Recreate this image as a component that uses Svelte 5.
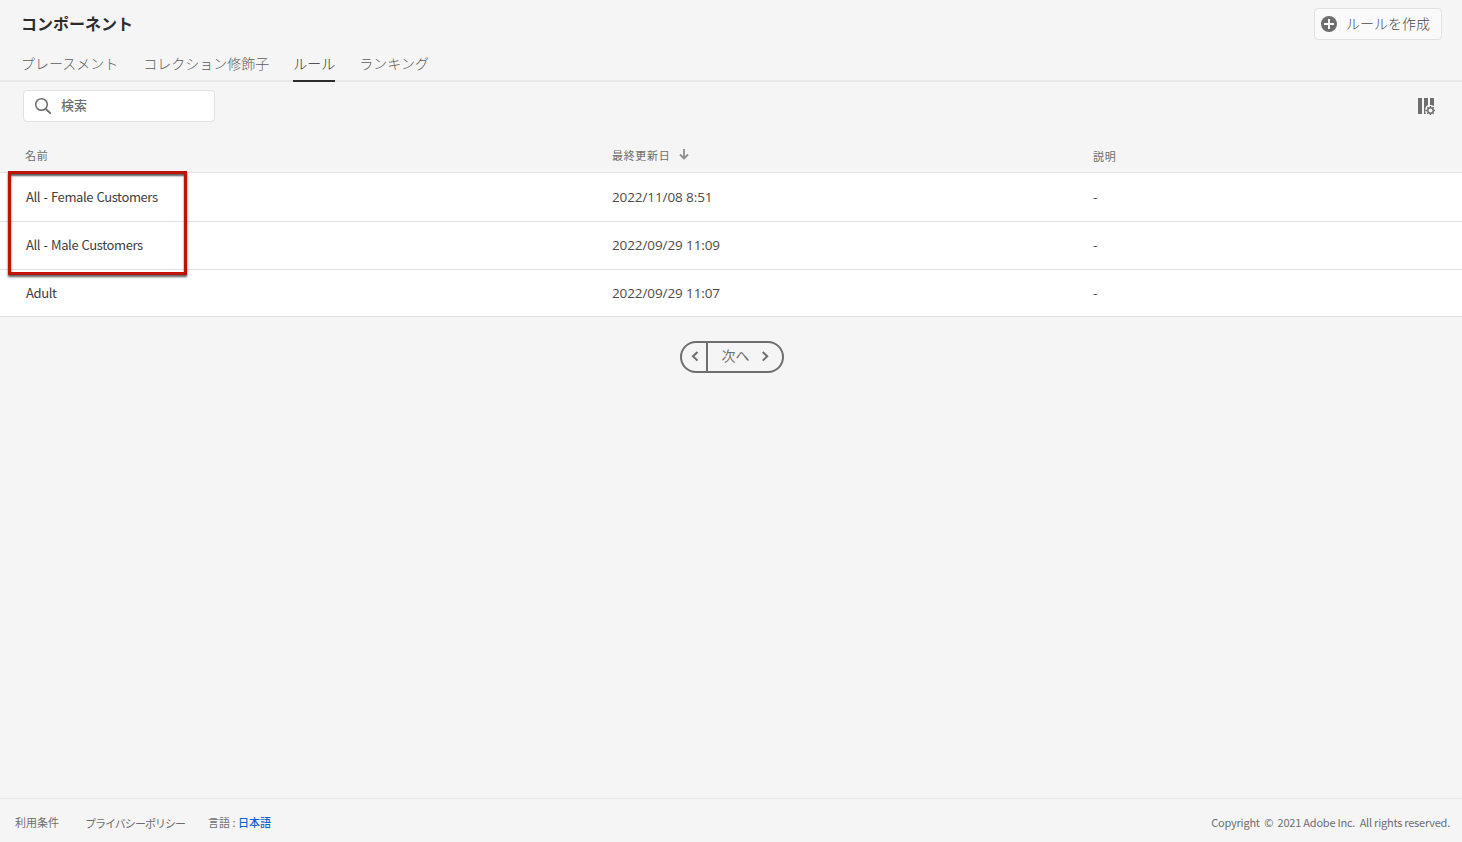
<script lang="ts">
	const tabs = ["プレースメント", "コレクション修飾子", "ルール", "ランキング"];
	let activeTab = $state("ルール");

	const rules = [
		{ name: "All - Female Customers", modified: "2022/11/08 8:51" },
		{ name: "All - Male Customers", modified: "2022/09/29 11:09" },
		{ name: "Adult", modified: "2022/09/29 11:07" }
	];
</script>

<div class="page">
	<header>
		<div class="title-row">
			<h1>コンポーネント</h1>
			<button class="create">
				<svg width="16" height="16" viewBox="0 0 16 16">
					<circle cx="8" cy="8" r="8" fill="#6e6e6e" />
					<path d="M8 3v10M3 8h10" stroke="#fafafa" stroke-width="2" />
				</svg>
				<span>ルールを作成</span>
			</button>
		</div>
		<nav>
			{#each tabs as tab}
				<button class="tab" class:active={tab === activeTab} onclick={() => (activeTab = tab)}>{tab}</button>
			{/each}
		</nav>
	</header>

	<div class="toolbar">
		<label class="search">
			<svg width="18" height="18" viewBox="0 0 18 18" fill="none" stroke="#6e6e6e">
				<circle cx="7.5" cy="7.5" r="5.8" stroke-width="1.5" />
				<path d="M11.8 11.8l4.4 4.4" stroke-width="1.9" stroke-linecap="round" />
			</svg>
			<input type="text" placeholder="検索" />
		</label>
		<button class="columns" aria-label="columns">
			<svg width="18" height="18" viewBox="0 0 18 18" fill="#6e6e6e">
				<path d="M0 0h4v16H0zM6 0h4v7L8 8.4l-.8 2.6.8 1.5-1 1.3 1 2.2H6zM12 0h4v8l-1.6-.6L13.6 7H12z" />
				<circle cx="12.5" cy="12.5" r="2.7" fill="none" stroke="#6e6e6e" stroke-width="1.4" />
				<path
					d="M12.5 8v1.6M12.5 15.4V17M8 12.5h1.6M15.4 12.5H17M9.3 9.3l1.2 1.2M14.5 14.5l1.2 1.2M9.3 15.7l1.2-1.2M14.5 10.5l1.2-1.2"
					stroke="#6e6e6e"
					stroke-width="1.4"
				/>
			</svg>
		</button>
	</div>

	<div class="table">
		<div class="row head">
			<span class="first">名前</span>
			<span class="sorted">
				<span>最終更新日</span>
				<svg width="10" height="11" viewBox="0 0 10 11" fill="none" stroke="#8e8e8e" stroke-width="1.8">
					<path d="M5 0v9M1 5.5l4 4 4-4" />
				</svg>
			</span>
			<span class="description">説明</span>
		</div>
		{#each rules as rule}
			<div class="row">
				<span class="name">{rule.name}</span>
				<span class="date">{rule.modified}</span>
				<span>-</span>
			</div>
		{/each}
		<div class="highlight"></div>
	</div>

	<div class="pager">
		<button class="prev" aria-label="prev">
			<svg width="8" height="12" viewBox="0 0 8 12"><path d="M6.5 1L2 5.3l4.5 4.3" /></svg>
		</button>
		<button class="next">
			<span>次へ</span>
			<svg width="8" height="12" viewBox="0 0 8 12"><path d="M1.7 1l4.5 4.3-4.5 4.3" /></svg>
		</button>
	</div>

	<footer>
		<span class="terms">利用条件</span>
		<span class="privacy">プライバシーポリシー</span>
		<span class="language">言語 : <b>日本語</b></span>
		<span class="copyright">Copyright&nbsp; ©&nbsp; 2021 Adobe Inc.&nbsp; All rights reserved.</span>
	</footer>
</div>

<style>
	:global(body) {
		background: #f5f5f5;
	}
	.page {
		display: flex;
		flex-direction: column;
		height: 842px;
		background: #f5f5f5;
		color: #4b4b4b;
		font-family: "Noto Sans CJK JP", sans-serif;
		font-size: 13px;
	}
	button {
		margin: 0;
		padding: 0;
		border: none;
		background: none;
		color: inherit;
		font: inherit;
	}
	svg {
		flex: none;
	}

	header {
		box-sizing: border-box;
		height: 82px;
		border-bottom: 2px solid #e8e8e8;
	}
	.title-row {
		display: flex;
		justify-content: space-between;
		align-items: center;
		height: 48px;
		padding: 0 20px 0 21px;
	}
	h1 {
		margin: 0;
		padding-bottom: 2px;
		color: #2c2c2c;
		font-size: 16px;
		font-weight: 700;
	}
	.create {
		display: flex;
		align-items: center;
		gap: 9px;
		box-sizing: border-box;
		width: 128px;
		height: 32px;
		padding-left: 6px;
		border: 1px solid #e1e1e1;
		border-radius: 4px;
		background: #fafafa;
		font-size: 14px;
		font-weight: 300;
	}
	.create span {
		padding-bottom: 3px;
	}
	nav {
		display: flex;
		gap: 24px;
		height: 34px;
		padding-left: 21px;
	}
	.tab {
		box-sizing: border-box;
		height: 34px;
		padding-bottom: 3px;
		border-bottom: 2px solid transparent;
		color: #5c5c5c;
		font-size: 14px;
		font-weight: 300;
	}
	.tab:first-child {
		margin-right: 1px;
	}
	.tab.active {
		border-color: #2c2c2c;
		color: #2c2c2c;
	}

	.toolbar {
		display: flex;
		justify-content: space-between;
		align-items: center;
		height: 48px;
		padding: 0 26px 0 23px;
	}
	.search {
		display: flex;
		align-items: center;
		gap: 9px;
		box-sizing: border-box;
		width: 192px;
		height: 32px;
		padding-left: 10px;
		border: 1px solid #e1e1e1;
		border-radius: 4px;
		background: #fff;
	}
	input {
		width: 130px;
		padding: 0 0 3px;
		border: none;
		outline: none;
		background: none;
		font: inherit;
	}
	input::placeholder {
		color: #6e6e6e;
		font-weight: 500;
	}
	.columns {
		display: flex;
		padding-top: 2px;
	}

	.table {
		position: relative;
	}
	.row {
		display: grid;
		grid-template-columns: 586px 481px 1fr;
		align-items: center;
		box-sizing: border-box;
		height: 48px;
		padding: 0 0 2px 26px;
		border-bottom: 1px solid #e1e1e1;
		background: #fff;
	}
	.head {
		height: 43px;
		padding: 6px 0 0 25px;
		background: none;
		color: #6e6e6e;
		font-size: 11px;
		letter-spacing: 0.66px;
	}
	.head + .row {
		height: 49px;
	}
	.row:nth-child(4) {
		height: 47px;
	}
	.first {
		padding-top: 1px;
	}
	.sorted {
		display: flex;
		align-items: center;
		gap: 9px;
		padding-left: 1px;
	}
	.sorted span {
		padding-top: 1px;
	}
	.description {
		padding: 3px 0 0 1px;
	}
	.name {
		letter-spacing: -0.4px;
		word-spacing: 0.9px;
		color: #404040;
	}
	.date {
		padding-top: 1px;
		font-family: "Open Sans", sans-serif;
		font-size: 13.5px;
		letter-spacing: -0.1px;
	}
	.highlight {
		position: absolute;
		top: 41px;
		left: 8px;
		box-sizing: border-box;
		width: 179px;
		height: 104px;
		border: 3px solid #bf1405;
		box-shadow:
			0 2px 2px rgba(0, 0, 0, 0.65),
			inset 0 2px 2px rgba(0, 0, 0, 0.65);
	}

	.pager {
		display: flex;
		align-self: center;
		box-sizing: border-box;
		width: 104px;
		height: 32px;
		margin: 24px 0 0 2px;
		border: 2px solid #6e6e6e;
		border-radius: 16px;
		color: #6e6e6e;
		font-size: 14px;
	}
	.pager svg {
		fill: none;
		stroke: #6e6e6e;
		stroke-width: 2;
	}
	.prev {
		display: flex;
		align-items: center;
		box-sizing: border-box;
		width: 26px;
		padding-left: 9px;
		border-right: 2px solid #6e6e6e;
	}
	.next {
		display: flex;
		align-items: center;
		gap: 11px;
		padding-left: 13.5px;
	}
	.next span {
		padding-bottom: 4px;
	}

	footer {
		display: flex;
		align-items: center;
		box-sizing: border-box;
		height: 44px;
		margin-top: auto;
		padding: 3px 12px 0 15px;
		border-top: 1px solid #e8e8e8;
		color: #6e6e6e;
		font-size: 11px;
	}
	.privacy {
		margin-left: 26px;
		padding-top: 2px;
		letter-spacing: -0.98px;
	}
	.language {
		margin-left: 23px;
	}
	b {
		color: #0d66d0;
		font-weight: 500;
	}
	.copyright {
		margin-left: auto;
		letter-spacing: -0.23px;
	}
</style>
